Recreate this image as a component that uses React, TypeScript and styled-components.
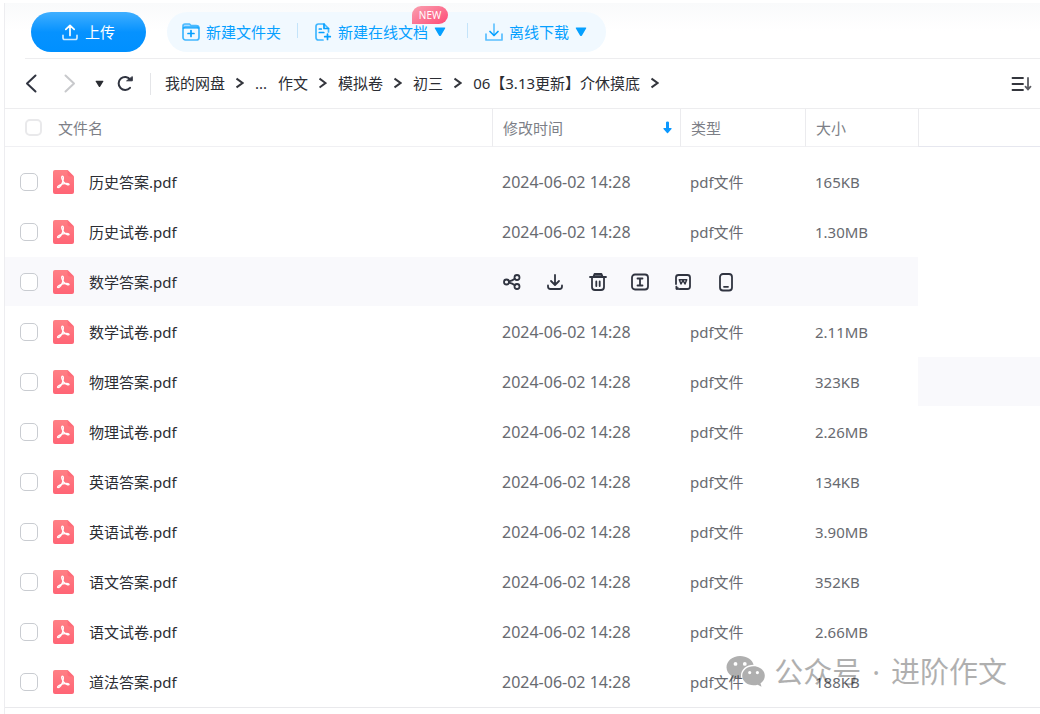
import React from 'react';
import styled, { createGlobalStyle } from 'styled-components';

const GlobalStyle = createGlobalStyle`
  *, *::before, *::after { box-sizing: border-box; }
  body {
    margin: 0;
    background: #fff;
    color: #2b2d33;
    font: 15px/20px "Noto Sans", "Noto Sans CJK SC", sans-serif;
  }
  button { margin: 0; padding: 0; border: 0; background: none; font: inherit; color: inherit; cursor: pointer; }
  svg { display: block; flex: none; }
`;

const Page = styled.div`
  position: relative;
  padding: 3px 0 0 4px;
  overflow: hidden;
`;

const Panel = styled.main`
  min-height: calc(100vh - 3px);
  border-left: 1px solid #ededf0;
  background: linear-gradient(#f9fafb, #fff 28px);
`;

const Toolbar = styled.header`
  display: flex;
  align-items: center;
  gap: 21px;
  margin-left: 20px;
  padding: 9px 6px 6px;
  border-bottom: 1px solid #ededef;
`;

const UploadButton = styled.button`
  display: flex;
  align-items: center;
  justify-content: center;
  gap: 7px;
  width: 115px;
  height: 40px;
  border-radius: 20px;
  background: linear-gradient(#40afff, #0692ff 50%, #0090ff);
  color: #fff;
`;

const ToolGroup = styled.div`
  display: flex;
  align-items: center;
  height: 40px;
  padding: 0 14px 0 15px;
  border-radius: 20px;
  background: #f1f9ff;
  color: #06a0ff;
`;

const ToolButton = styled.button<{ $menu?: boolean }>`
  position: relative;
  display: flex;
  align-items: center;
  gap: 6px;
  height: 40px;
  padding-right: ${p => (p.$menu ? 5 : 0)}px;
`;

const Divider = styled.span<{ $tall?: boolean }>`
  width: 1px;
  height: ${p => (p.$tall ? 22 : 15)}px;
  margin: ${p => (p.$tall ? '0 14px 0 4px' : '0 17px 3px 16px')};
  background: ${p => (p.$tall ? '#e4e5e8' : '#c4e4fa')};
`;

const NewBadge = styled.span`
  position: absolute;
  top: -6px;
  right: 3px;
  width: 36px;
  height: 18px;
  border-radius: 9px 9px 9px 0;
  background: linear-gradient(150deg, #f9a0b0, #ff4a76);
  color: #fff;
  font-size: 10px;
  line-height: 18px;
  text-align: center;
`;

const NavBar = styled.nav`
  display: flex;
  align-items: center;
  height: 49px;
  padding: 0 8px 0 12px;
`;

const NavButton = styled.button<{ $width: number }>`
  display: flex;
  justify-content: center;
  width: ${p => p.$width}px;
`;

const Crumbs = styled.ol`
  display: flex;
  align-items: center;
  gap: 11px;
  flex: 1;
  margin: 0;
  padding: 0 0 2px;
  list-style: none;
  white-space: nowrap;
`;

const Crumb = styled.li`
  display: flex;
  align-items: center;
  gap: 11px;
`;

const CrumbLink = styled.a`
  color: inherit;
  text-decoration: none;
`;

const FileTable = styled.table`
  width: 100%;
  table-layout: fixed;
  border-spacing: 0;
  border-top: 1px solid #ededef;
  border-bottom: 1px solid #e9e9ec;
`;

const Column = styled.col<{ $width?: number }>`
  width: ${p => (p.$width ? `${p.$width}px` : 'auto')};
`;

const HeadCell = styled.th`
  height: 38px;
  padding: 0 8px 0 10px;
  border-left: 1px solid #ebebee;
  border-bottom: 1px solid #f0f0f3;
  color: #7d7f87;
  font-weight: 400;
  text-align: left;

  &:first-child { border-left: 0; padding-left: 20px; }
  &:last-child { border-bottom-color: #e6e7ef; }
`;

const HeadContent = styled.div`
  display: flex;
  align-items: center;
  justify-content: space-between;
`;

const NameHead = styled.div`
  display: flex;
  align-items: center;
  gap: 16px;
`;

const Rows = styled.tbody`
  &::before { content: ""; display: block; height: 10px; }
`;

const Cell = styled.td<{ $shaded?: boolean; $size?: number }>`
  height: 50px;
  padding: 0 0 0 10px;
  border-bottom: 1px solid #fff;
  background: ${p => (p.$shaded ? '#f9f9fc' : 'transparent')};
  background-clip: padding-box;
  color: #686a70;
  font-size: ${p => p.$size ?? 15}px;
  white-space: nowrap;

  &:first-child { padding-left: 15px; color: #2b2d33; }
`;

const NameContent = styled.label`
  display: flex;
  align-items: center;
  gap: 15px;
`;

const CheckBox = styled.input.attrs({ type: 'checkbox' })<{ $faint?: boolean }>`
  appearance: none;
  flex: none;
  width: ${p => (p.$faint ? 17 : 18)}px;
  height: ${p => (p.$faint ? 17 : 18)}px;
  margin: 0;
  border: ${p => (p.$faint ? '2px solid #e9e9eb' : '1px solid #c9ccd1')};
  border-radius: 5px;
  background: #fff;
  &:checked { background: #06a0ff; }
`;

const Actions = styled.div`
  display: flex;
  justify-content: space-between;
  width: 234px;
`;

const ActionButton = styled.button`
  display: flex;
  align-items: center;
  justify-content: center;
  width: 20px;
  height: 24px;
`;

const Watermark = styled.div`
  position: absolute;
  top: 652px;
  right: 33px;
  display: flex;
  align-items: center;
  gap: 8px;
  color: #000;
  font-size: 29px;
  line-height: 40px;
  white-space: nowrap;
  opacity: 0.31;
  pointer-events: none;
`;

const Dot = styled.span`
  margin: 0 11px;
`;

const line = { fill: 'none', stroke: 'currentColor', strokeLinecap: 'round', strokeLinejoin: 'round' } as const;

const Triangle = ({ size = 12 }: { size?: number }) => (
  <svg width={size} height={size === 12 ? 10 : 8} viewBox="0 0 12 10" fill="currentColor">
    <path d="M1.5 0.5h9q1.3 0 .6 1.1L7 8.4q-1 1.4-2 0L.9 1.6Q.2.5 1.5.5z" />
  </svg>
);

const UploadIcon = () => (
  <svg width="16" height="17" viewBox="0 0 16 17" {...line} strokeWidth="1.7">
    <path d="M8 11.5V1.5M3.8 5.4L8 1.3l4.2 4.1" />
    <path d="M1 11.3v2.5q0 1.7 1.7 1.7h10.6q1.7 0 1.7-1.7v-2.5" opacity=".8" />
  </svg>
);

const FolderIcon = () => (
  <svg width="18" height="18" viewBox="0 0 18 18" {...line} strokeWidth="1.7">
    <path d="M1 5V3q0-2 2-2h4.500l1.500 1.500h5Q17 2.500 17 5z" fill="#8fd0ff" opacity=".7" />
    <rect x="1" y="4" width="16" height="13" rx="2.500" opacity=".75" />
    <path d="M9 7.500v6M6 10.500h6" />
  </svg>
);

const DocIcon = () => (
  <svg width="17" height="18" viewBox="0 0 17 18" {...line} strokeWidth="1.7">
    <path d="M8 17H3.500Q1 17 1 14.500V3.500Q1 1 3.500 1H9l4.500 4.500V9" opacity=".75" />
    <path d="M9 1v4.500h4.500M4.300 6h2M4.300 9.500h4.500M12.500 11v5.500M9.700 13.700h5.600" />
  </svg>
);

const OfflineIcon = () => (
  <svg width="18" height="18" viewBox="0 0 18 18" {...line} strokeWidth="1.7">
    <path d="M1 11v6h16v-6" opacity=".65" />
    <path d="M9 1v11" opacity=".6" />
    <path d="M5 8.500l4 4 4-4" />
  </svg>
);

const CrumbArrow = () => (
  <svg width="8" height="12" viewBox="0 0 8 12" fill="none" stroke="#34363d" strokeWidth="2">
    <path d="M.5 1.500L6.500 6l-6 4.500" />
  </svg>
);

const SortIcon = () => (
  <svg width="21" height="16" viewBox="0 0 21 16" fill="none" stroke="#34363d" strokeWidth="1.800" strokeLinecap="round">
    <path d="M1.500 2h10.500M1.500 8h10.500M1.500 14h10.500" />
    <path d="M17 2v11M14.500 10.700L17 13.500l2.500-2.800" stroke="#5b5d63" />
  </svg>
);

const PdfIcon = () => (
  <svg width="21" height="26" viewBox="0 0 21 26">
    <defs>
      <linearGradient id="pdfFill" x1="0" y1="0" x2="0" y2="1">
        <stop offset="0" stopColor="#ff8085" />
        <stop offset="1" stopColor="#ff6475" />
      </linearGradient>
    </defs>
    <path d="M3 1h11.500L21 7.500V23q0 2-2 2H2q-2 0-2-2V3q0-2 2-2z" fill="url(#pdfFill)" />
    <path d="M14.500 1L21 7.500h-4.500q-2 0-2-2z" fill="#ff6b79" />
    <path
      d="M9 7.300c2.300-.6 1.200 3.500.8 5.200-.6 2.500-3.400 6.800-5 6-1.200-1.200 2.500-3.100 5.200-3.600 2.500-.5 6-.8 6.100.5-.2 1.500-4.200-.6-5.500-2.400C9.500 11.600 7.900 8 9 7.300z"
      fill="none"
      stroke="#fff"
      strokeWidth="1.300"
    />
  </svg>
);

const dark = { fill: 'none', stroke: '#303440', strokeWidth: 1.8, strokeLinecap: 'round', strokeLinejoin: 'round' } as const;

const actions = [
  {
    name: '分享',
    icon: (
      <svg width="20" height="20" viewBox="0 0 20 20" {...dark}>
        <circle cx="4.500" cy="10" r="2.500" />
        <circle cx="15" cy="5.500" r="2.500" />
        <circle cx="15" cy="14.500" r="2.500" />
        <path d="M7 9.300Q10.500 8.500 12.800 6.700M7 10.700Q10.500 11.500 12.800 13.300" />
      </svg>
    ),
  },
  {
    name: '下载',
    icon: (
      <svg width="20" height="20" viewBox="0 0 20 20" {...dark}>
        <path d="M10 3v9M6 9l4 4 4-4M3 13.500v1q0 2.500 2.500 2.500h9q2.500 0 2.500-2.500v-1" />
      </svg>
    ),
  },
  {
    name: '删除',
    icon: (
      <svg width="20" height="20" viewBox="0 0 20 20" {...dark}>
        <path d="M5.500 4.500l1-2.500h7l1 2.500z" fill="#8b8e97" />
        <path d="M2 5h16M4 5.500V15q0 3 3 3h6q3 0 3-3V5.500" />
        <path d="M8.300 9.500v4.500M11.700 9.500v4.500" />
      </svg>
    ),
  },
  {
    name: '重命名',
    icon: (
      <svg width="20" height="20" viewBox="0 0 20 20" {...dark}>
        <rect x="2" y="2.500" width="16" height="15" rx="3" />
        <path d="M7.500 6.500h5M10 6.500v7M7.500 13.500h5" />
      </svg>
    ),
  },
  {
    name: '转为Word',
    icon: (
      <svg width="20" height="20" viewBox="0 0 20 20" {...dark}>
        <path d="M3 12V5.500Q3 3 5.500 3h9Q17 3 17 5.500v9q0 2.500-2.500 2.500H7" />
        <path d="M6.300 7.800l1.700 4.200 2-3.600 2 3.600 1.700-4.200z" strokeWidth="1.500" />
        <path d="M3 14.300v3h3.500z" fill="#303440" strokeWidth="1" />
      </svg>
    ),
  },
  {
    name: '发送到手机',
    icon: (
      <svg width="20" height="20" viewBox="0 0 20 20" {...dark}>
        <rect x="4" y="2" width="12" height="16.500" rx="3" />
        <path d="M8 14.800h4" />
      </svg>
    ),
  },
];

const files = [
  ['历史答案', '165KB'],
  ['历史试卷', '1.30MB'],
  ['数学答案', ''],
  ['数学试卷', '2.11MB'],
  ['物理答案', '323KB'],
  ['物理试卷', '2.26MB'],
  ['英语答案', '134KB'],
  ['英语试卷', '3.90MB'],
  ['语文答案', '352KB'],
  ['语文试卷', '2.66MB'],
  ['道法答案', '188KB'],
];

const crumbs = ['我的网盘', '...', '作文', '模拟卷', '初三', '06【3.13更新】介休摸底'];

export default function App() {
  return (
    <Page>
      <GlobalStyle />
      <Panel>
        <Toolbar>
          <UploadButton><UploadIcon />上传</UploadButton>
          <ToolGroup>
            <ToolButton><FolderIcon />新建文件夹</ToolButton>
            <Divider />
            <ToolButton $menu>
              <DocIcon />新建在线文档<Triangle />
              <NewBadge>NEW</NewBadge>
            </ToolButton>
            <Divider />
            <ToolButton $menu><OfflineIcon />离线下载<Triangle /></ToolButton>
          </ToolGroup>
        </Toolbar>

        <NavBar>
          <NavButton $width={28} aria-label="后退">
            <svg width="12" height="19" viewBox="0 0 12 19" {...line} stroke="#303440" strokeWidth="2"><path d="M10.500 1.500L2 9.500l8.500 8" /></svg>
          </NavButton>
          <NavButton $width={50} aria-label="前进">
            <svg width="12" height="19" viewBox="0 0 12 19" {...line} stroke="#c8c9cc" strokeWidth="2"><path d="M1.500 1.500l8.500 8-8.500 8" /></svg>
          </NavButton>
          <NavButton $width={9} aria-label="历史记录"><Triangle size={9} /></NavButton>
          <NavButton $width={42} aria-label="刷新">
            <svg width="18" height="17" viewBox="0 0 18 17" {...line} stroke="#303440" strokeWidth="2">
              <path d="M14 12.800A6.500 6.500 0 1 1 14.300 4.500" />
              <path d="M11 5.800h5.300V2z" fill="#303440" strokeWidth="1" />
            </svg>
          </NavButton>
          <Divider $tall />
          <Crumbs>
            {crumbs.map(c => (
              <Crumb key={c}>
                <CrumbLink href="#">{c}</CrumbLink>
                {c !== '...' && <CrumbArrow />}
              </Crumb>
            ))}
          </Crumbs>
          <NavButton $width={21} aria-label="排序"><SortIcon /></NavButton>
        </NavBar>

        <FileTable>
          <colgroup>
            <Column />
            <Column $width={188} />
            <Column $width={125} />
            <Column $width={113} />
            <Column $width={122} />
          </colgroup>
          <thead>
            <tr>
              <HeadCell>
                <NameHead><CheckBox $faint aria-label="全选" />文件名</NameHead>
              </HeadCell>
              <HeadCell>
                <HeadContent>
                  修改时间
                  <svg width="9" height="13" viewBox="0 0 9 13" fill="#0a98ff">
                    <path d="M3 1.500q0-1 1.500-1t1.500 1V7h2.200q.8.300.3 1L5 12q-.5.500-1 0L.5 8q-.5-.7.300-1H3z" />
                  </svg>
                </HeadContent>
              </HeadCell>
              <HeadCell>类型</HeadCell>
              <HeadCell>大小</HeadCell>
              <HeadCell />
            </tr>
          </thead>
          <Rows>
            {files.map(([name, size], i) => (
              <tr key={name}>
                <Cell $shaded={!size}>
                  <NameContent>
                    <CheckBox />
                    <PdfIcon />
                    {name}.pdf
                  </NameContent>
                </Cell>
                {size ? (
                  <>
                    <Cell $size={16}>2024-06-02 14:28</Cell>
                    <Cell>pdf文件</Cell>
                    <Cell>{size}</Cell>
                  </>
                ) : (
                  <Cell $shaded colSpan={3}>
                    <Actions>
                      {actions.map(a => (
                        <ActionButton key={a.name} aria-label={a.name}>{a.icon}</ActionButton>
                      ))}
                    </Actions>
                  </Cell>
                )}
                <Cell $shaded={i === 4} />
              </tr>
            ))}
          </Rows>
        </FileTable>
      </Panel>

      <Watermark>
        <svg width="40" height="34" viewBox="0 0 40 34" fill="currentColor">
          <path
            fillRule="evenodd"
            d="M14 1C6.500 1 .5 6 .5 12.300c0 3.600 2 6.700 5 8.700L4.200 25.200l4.900-2.500c1.900.6 4 .9 6.300.7A10 10 0 0 1 15 20.500c0-6 5.500-10.700 12.600-10.700C26.500 4.800 20.800 1 14 1zM9.500 7a1.900 1.900 0 1 1 0 3.800 1.900 1.900 0 0 1 0-3.800zm9.300 0a1.900 1.900 0 1 1 0 3.800 1.900 1.900 0 0 1 0-3.800z"
          />
          <path
            fillRule="evenodd"
            d="M27.500 11.300c-6.300 0-11.300 4.200-11.300 9.500s5 9.500 11.300 9.500c1.500 0 2.900-.2 4.200-.6l3.800 2.100-1-3.500c2.600-1.800 4.300-4.500 4.300-7.500 0-5.300-5-9.500-11.300-9.500zM23.700 16a1.600 1.600 0 1 1 0 3.200 1.600 1.600 0 0 1 0-3.200zm7.700 0a1.600 1.600 0 1 1 0 3.200 1.600 1.600 0 0 1 0-3.200z"
          />
        </svg>
        <span>公众号<Dot>·</Dot>进阶作文</span>
      </Watermark>
    </Page>
  );
}
